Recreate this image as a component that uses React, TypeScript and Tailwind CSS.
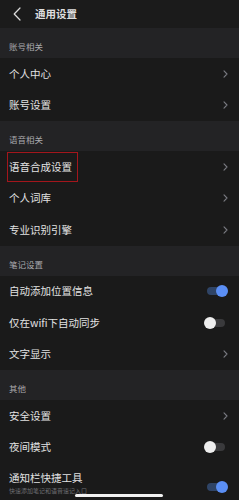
import React from "react";

const FONT = { fontFamily: '"Noto Sans CJK SC", "Noto Sans", sans-serif' };

function Chevron() {
  return (
    <svg width="5" height="8" viewBox="0 0 5 8" className="shrink-0">
      <path d="M1 0.8 L4 4 L1 7.2" fill="none" stroke="#7a7b82" strokeWidth="1.1" strokeLinecap="round" strokeLinejoin="round" />
    </svg>
  );
}

function Toggle({ on }: { on: boolean }) {
  return (
    <div className={`relative w-[18px] h-[8px] rounded-full ${on ? "bg-[#2f4466]" : "bg-[#3a3a3c]"} mr-[3px]`}>
      <div
        className={`absolute top-1/2 -translate-y-1/2 w-[12px] h-[12px] rounded-full ${
          on ? "right-[-3px] bg-[#5b8ff5]" : "left-[-3px] bg-[#eeeeee]"
        }`}
      />
    </div>
  );
}

function Band({ title }: { title: string }) {
  return (
    <div className="h-[30px] bg-[#232325] pl-[9px] pt-[12px] text-[8.5px] leading-[12px] text-[#a9a9ad]">
      {title}
    </div>
  );
}

function Row({ label, right, boxed }: { label: string; right: "chev" | "on" | "off"; boxed?: boolean }) {
  return (
    <div className="h-[31.5px] flex items-center justify-between pl-[9px] pr-[11px] bg-[#1a1a1a]">
      {boxed ? (
        <div className="-ml-[2px] h-[30px] w-[71px] border border-[#a3161c] flex items-center pl-[1px]">
          <span className="text-[10.5px] text-[#e2e2e2] leading-none">{label}</span>
        </div>
      ) : (
        <span className="text-[10.5px] text-[#e2e2e2] leading-none">{label}</span>
      )}
      {right === "chev" ? <Chevron /> : <Toggle on={right === "on"} />}
    </div>
  );
}

export default function App() {
  return (
    <div className="relative w-[239px] h-[500px] overflow-hidden bg-[#1a1a1a]" style={FONT}>
      <div className="h-[28px] bg-[#1b1b1b] flex items-center">
        <svg width="8" height="14" viewBox="0 0 8 14" className="ml-[13px]">
          <path d="M7 1 L1.2 7 L7 13" fill="none" stroke="#dcdcdc" strokeWidth="1.2" strokeLinecap="round" strokeLinejoin="round" />
        </svg>
        <span className="ml-[14px] text-[10.5px] font-bold text-[#dedede] leading-none">通用设置</span>
      </div>

      <Band title="账号相关" />
      <Row label="个人中心" right="chev" />
      <Row label="账号设置" right="chev" />

      <Band title="语音相关" />
      <Row label="语音合成设置" right="chev" boxed />
      <Row label="个人词库" right="chev" />
      <Row label="专业识别引擎" right="chev" />

      <Band title="笔记设置" />
      <Row label="自动添加位置信息" right="on" />
      <Row label="仅在wifi下自动同步" right="off" />
      <Row label="文字显示" right="chev" />

      <Band title="其他" />
      <Row label="安全设置" right="chev" />
      <Row label="夜间模式" right="off" />

      <div className="flex items-start justify-between pl-[9px] pr-[11px] pt-[9px]">
        <div className="flex flex-col">
          <span className="text-[10.5px] text-[#e2e2e2] leading-[12px]">通知栏快捷工具</span>
          <span className="mt-[3px] text-[6px] leading-[7px] text-[#6f6f73]">快速添加笔记和语音速记入口</span>
        </div>
        <div className="mt-[11px]">
          <Toggle on />
        </div>
      </div>

      <div className="absolute left-[75px] bottom-[3px] w-[88px] h-[3px] rounded-full bg-[#f2f2f2]" />
    </div>
  );
}
